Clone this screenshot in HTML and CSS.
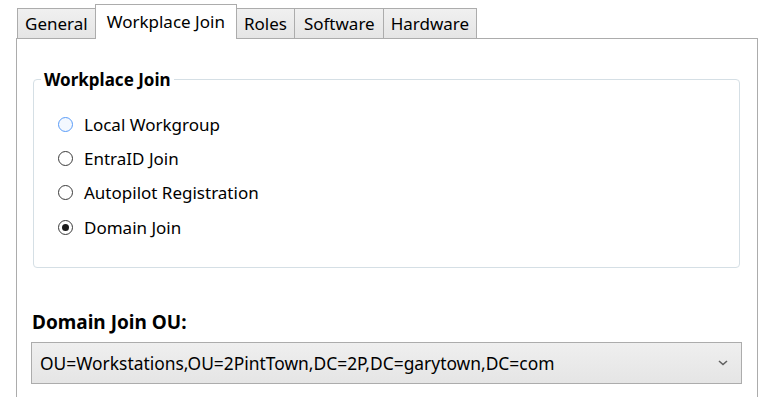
FILE: index.html
```html
<!DOCTYPE html>
<html>
	<head>
		<title>Workplace Join</title>
		<meta name="viewport" content="width=device-width, initial-scale=1.0">
		<link rel="stylesheet" href="styles.css">
	</head>
	<body>
		<div class="tabs">
			<div class="tab">General</div>
			<div class="tab active">Workplace Join</div>
			<div class="tab">Roles</div>
			<div class="tab wide">Software</div>
			<div class="tab">Hardware</div>
		</div>
		<div class="panel">
			<fieldset class="group">
				<legend>Workplace Join</legend>
				<label class="radio"><span class="dot hover"></span>Local Workgroup</label>
				<label class="radio"><span class="dot"></span>EntraID Join</label>
				<label class="radio"><span class="dot"></span>Autopilot Registration</label>
				<label class="radio"><span class="dot checked"></span>Domain Join</label>
			</fieldset>
			<div class="oulabel">Domain Join OU:</div>
			<div class="combo">
				<span class="combotext">OU=Workstations,OU=2PintTown,DC=2P,DC=garytown,DC=com</span>
				<svg class="chevron" width="10" height="6" viewBox="0 0 10 6"><path d="M1 1 L5 4.5 L9 1" fill="none" stroke="#606060" stroke-width="1.6"/></svg>
			</div>
		</div>
	</body>
</html>
```

FILE: styles.css
```css
body {
	font-family: 'Noto Sans', sans-serif;
	font-size: 17px;
	margin: 0px;
	background: #ffffff;
	color: #000000;
	overflow: hidden;
}

.tabs {
	display: flex;
	align-items: flex-end;
	height: 38px;
	padding-left: 17px;
}
.tab {
	height: 30px;
	line-height: 29px;
	padding: 0 7px;
	border: 1px solid #acacac;
	border-bottom: none;
	border-right: none;
	background: linear-gradient(180deg, #f0f0f0 0%, #e5e5e5 100%);
	box-sizing: border-box;
}
.tab.wide {
	padding: 0 8px 0 9px;
}
.tab:last-child {
	border-right: 1px solid #acacac;
}
.tab.active {
	height: 35px;
	line-height: 33px;
	padding: 0 11px;
	background: #ffffff;
	border: 1px solid #acacac;
	border-bottom: none;
	margin-bottom: -1px;
	position: relative;
	z-index: 1;
}
.tab.active + .tab {
	border-left: none;
}

.panel {
	margin-left: 16px;
	width: 742px;
	height: 359px;
	border: 1px solid #acacac;
	border-bottom: none;
	box-sizing: border-box;
	padding: 0 17px 0 16px;
}

.group {
	margin: 29px 0 0 0;
	padding: 16px 0 20px 24px;
	border: 1px solid #d5dfe5;
	border-radius: 4px;
	height: 200px;
	box-sizing: border-box;
}
.group legend {
	font-weight: bold;
	font-size: 17px;
	padding: 0 3px;
	margin-left: -17px;
}

.radio {
	display: flex;
	align-items: center;
	height: 34.3px;
}
.dot {
	width: 13px;
	height: 13px;
	border: 1px solid #3a3a3a;
	border-radius: 50%;
	margin-right: 11px;
	display: flex;
	align-items: center;
	justify-content: center;
	background: #ffffff;
}
.dot.hover {
	border-color: #5a9cf8;
	background: #f3f8ff;
}
.dot.checked::after {
	content: "";
	width: 7px;
	height: 7px;
	border-radius: 50%;
	background: #1a1a1a;
}

.oulabel {
	font-weight: bold;
	font-size: 19px;
	margin-top: 41px;
	margin-left: -1px;
}
.combo {
	display: flex;
	align-items: center;
	justify-content: space-between;
	margin: 7px -2px 0 -2px;
	height: 42px;
	padding: 0 9px 0 8px;
	border: 1px solid #acacac;
	background: linear-gradient(180deg, #efefef 0%, #e5e5e5 100%);
	box-sizing: border-box;
}
.combotext {
	font-size: 17.4px;
}
.chevron {
	margin-right: 4px;
}
```
